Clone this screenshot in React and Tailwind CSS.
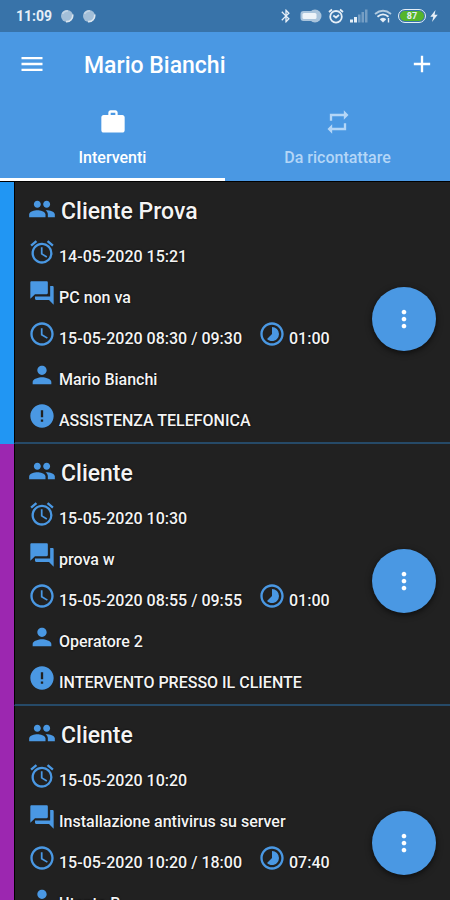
import React from "react";
import {
    MdAccessTime,
    MdAdd,
    MdAlarm,
    MdBluetooth,
    MdError,
    MdMenu,
    MdMoreVert,
    MdPeople,
    MdPerson,
    MdQuestionAnswer,
    MdRepeat,
    MdTimelapse,
    MdWork,
} from "react-icons/md";

const interventi = [
    {
        id: 1,
        cliente: "Cliente Prova",
        richiesta: "14-05-2020 15:21",
        descrizione: "PC non va",
        orario: "15-05-2020 08:30 / 09:30",
        durata: "01:00",
        operatore: "Mario Bianchi",
        tipo: "ASSISTENZA TELEFONICA",
        stripe: "bg-[#2196f3]",
    },
    {
        id: 2,
        cliente: "Cliente",
        richiesta: "15-05-2020 10:30",
        descrizione: "prova w",
        orario: "15-05-2020 08:55 / 09:55",
        durata: "01:00",
        operatore: "Operatore 2",
        tipo: "INTERVENTO PRESSO IL CLIENTE",
        stripe: "bg-[#9c27b0]",
    },
    {
        id: 3,
        cliente: "Cliente",
        richiesta: "15-05-2020 10:20",
        descrizione: "Installazione antivirus su server",
        orario: "15-05-2020 10:20 / 18:00",
        durata: "07:40",
        operatore: "Utente B",
        stripe: "bg-[#9c27b0]",
    },
];

const NotificationDot = () => (
    <svg viewBox="0 0 14 14" className="w-3.5 h-3.5">
        <circle cx="7" cy="7" r="6" fill="#a3bfd8"/>
        <path d="M2.5 5 A5 5 0 0 1 8 2" stroke="#c3d5e5" strokeWidth="1.5" fill="none"/>
        <path d="M12.6 5.5 A6 6 0 0 1 6 12.6" stroke="#dbe6ef" strokeWidth="1.6" fill="none"/>
    </svg>
);

const StatusBar = () => (
    <div className="h-8 pl-4 pr-3 flex items-center justify-between bg-[#3873a9] text-[#e6eff7]">
        <div className="flex items-center gap-2">
            <span className="text-sm font-bold">11:09</span>
            <NotificationDot/>
            <NotificationDot/>
        </div>
        <div className="flex items-center gap-1.5">
            <MdBluetooth className="w-4 h-4"/>
            <svg viewBox="0 0 22 14" className="w-5.5 h-3.5">
                <circle cx="15" cy="7" r="6.5" fill="#a9c4dc"/>
                <rect x="0.5" y="2" width="17" height="10" rx="3" fill="#a9c4dc"/>
                <rect x="2.5" y="4" width="14" height="6" rx="1.5" fill="#eef4f9"/>
            </svg>
            <svg viewBox="0 0 16 16" className="w-4 h-4" fill="none" stroke="currentColor" strokeWidth="1.8">
                <circle cx="8" cy="8.8" r="5.8"/>
                <path d="M1 4 L4 1.5 M15 4 L12 1.5 M5.3 7.5 L8 9.5 L11 7"/>
            </svg>
            <svg viewBox="0 0 18 14" className="w-4.5 h-3.5" fill="currentColor">
                <rect x="0" y="10.5" width="3" height="3"/>
                <rect x="4" y="8" width="3" height="5.5"/>
                <g opacity="0.35">
                    <rect x="8" y="5.5" width="2.5" height="8"/>
                    <rect x="11.5" y="3" width="2.5" height="10.5"/>
                    <rect x="15" y="0.5" width="2.5" height="13"/>
                </g>
            </svg>
            <svg viewBox="0 0 18 14" className="w-4.5 h-3.5" fill="none" stroke="currentColor" strokeWidth="1.8">
                <path d="M1 5 Q9 -1.5 17 5" opacity="0.7"/>
                <path d="M3.5 7.8 Q9 3 14.5 7.8"/>
                <path d="M6 10.3 Q9 7.8 12 10.3 L9 13.2 Z" fill="currentColor" strokeWidth="0.5"/>
                <path d="M14.5 9 V13.5" strokeWidth="1.4"/>
            </svg>
            <div className="flex items-center gap-1">
                <div className="w-7 h-3.5 p-px rounded-full border border-[#e6eff7] flex">
                    <div className="flex-1 rounded-full bg-[#55b52c] text-[9px] leading-none font-bold flex items-center justify-center">
                        87
                    </div>
                </div>
                <svg viewBox="0 0 8 12" className="w-2 h-3" fill="currentColor">
                    <path d="M5.5 0 L0.3 6.8 H3.3 L2 12 L7.7 4.8 H4.6 Z"/>
                </svg>
            </div>
        </div>
    </div>
);

const Tab = ({icon: Icon, label, active}) => (
    <button
        type="button"
        role="tab"
        aria-selected={active}
        className={`flex-1 pt-3 pb-2 flex flex-col items-center gap-2.5 border-b-3 text-base font-medium ${active ? "border-white text-white" : "border-transparent text-[#b4d6f7]"}`}
    >
        <Icon className="w-7 h-7"/>
        <span className="leading-6">{label}</span>
    </button>
);

const Row = ({icon: Icon, children}) => (
    <div className="flex gap-[3px]">
        <Icon className="w-7 h-7 text-[#4a98e3]"/>
        <span className="pt-[7px] leading-6">{children}</span>
    </div>
);

const Intervento = ({item}) => (
    <li className="flex min-h-[262px]">
        <div className={`w-3.5 ${item.stripe}`}/>
        <div className="flex-1 flex items-center justify-between pl-[13px] pr-3.5 border-l border-l-black border-b-2 border-b-[#264a68]">
            <div className="self-start pt-[13px] flex flex-col gap-2.5 text-base font-medium text-[#f4f4f4] text-shadow-[0_0_2px_#000]">
                <div className="h-[33px] flex gap-[5px]">
                    <MdPeople className="w-7 h-7 text-[#4a98e3]"/>
                    <h2 className="text-[23px] leading-[34px]">{item.cliente}</h2>
                </div>
                <Row icon={MdAlarm}>{item.richiesta}</Row>
                <Row icon={MdQuestionAnswer}>{item.descrizione}</Row>
                <div className="flex gap-4">
                    <Row icon={MdAccessTime}>{item.orario}</Row>
                    <Row icon={MdTimelapse}>{item.durata}</Row>
                </div>
                <Row icon={MdPerson}>{item.operatore}</Row>
                {item.tipo && <Row icon={MdError}>{item.tipo}</Row>}
            </div>
            <button
                type="button"
                aria-label="Azioni"
                className="mt-3.5 w-16 h-16 rounded-full bg-[#4a98e3] text-white flex items-center justify-center shadow-[0_2px_6px_#000000a0]"
            >
                <MdMoreVert className="w-7 h-7"/>
            </button>
        </div>
    </li>
);

const App = () => {
    return (
        <div className="h-screen overflow-hidden flex flex-col bg-[#212121] font-['Roboto',sans-serif]">
            <header className="bg-[#4a98e3] text-white">
                <StatusBar/>
                <div className="h-16 pl-4.5 pr-3.5 flex items-center">
                    <button type="button" aria-label="Menu">
                        <MdMenu className="w-7 h-7"/>
                    </button>
                    <h1 className="flex-1 pt-1 pl-9.5 text-[23px] font-medium">Mario Bianchi</h1>
                    <button type="button" aria-label="Aggiungi">
                        <MdAdd className="w-7 h-7"/>
                    </button>
                </div>
                <div role="tablist" className="flex">
                    <Tab icon={MdWork} label="Interventi" active/>
                    <Tab icon={MdRepeat} label="Da ricontattare"/>
                </div>
            </header>
            <ul className="flex-1 overflow-hidden border-t border-black">
                {interventi.map((item) => (
                    <Intervento key={item.id} item={item}/>
                ))}
            </ul>
        </div>
    );
};

export default App;
